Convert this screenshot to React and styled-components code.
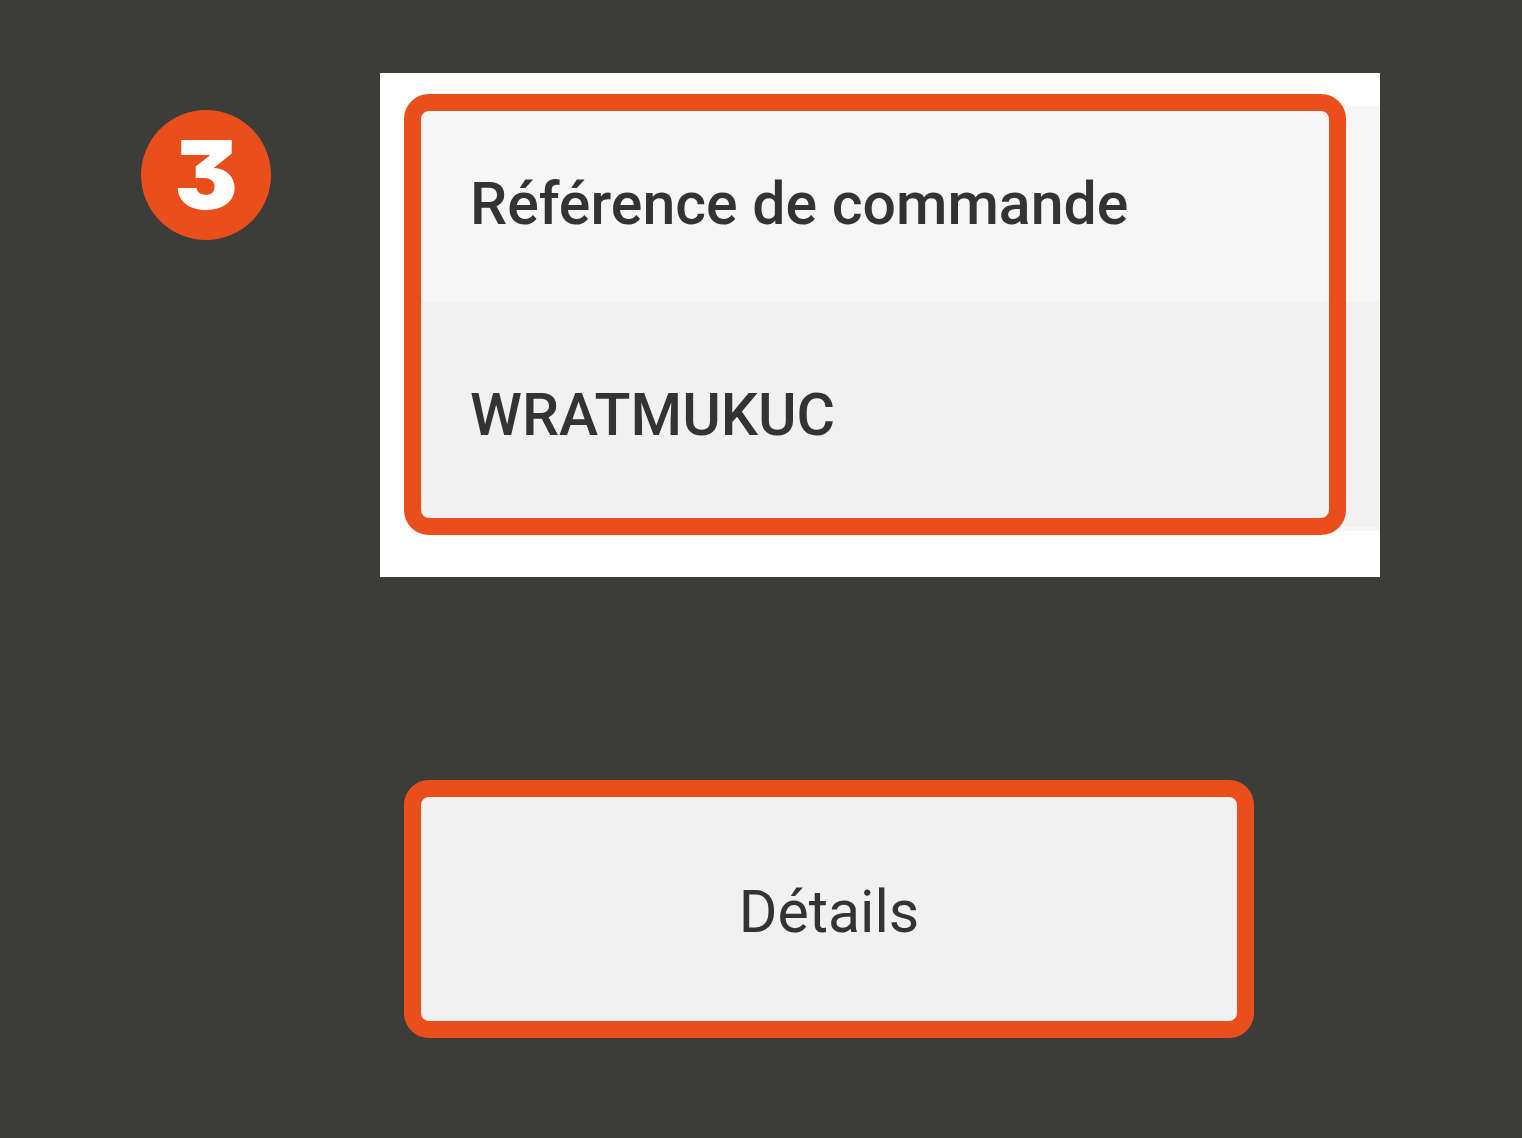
import styled, { createGlobalStyle } from "styled-components";

const Colors = {
    primary: '#ea4f1b',
    page: '#3c3c3a',
    text: '#333333',
    head: '#f6f6f6',
    row: '#f1f1f1',
};

const GlobalStyle = createGlobalStyle`
    * {
        box-sizing: border-box;
    }
    body {
        margin: 0;
        background: ${Colors.page};
        color: ${Colors.text};
        font-family: Roboto, "Liberation Sans", sans-serif;
    }
`;

const Page = styled.main`
    display: flex;
    align-items: flex-start;
    gap: 109px;
    min-height: 100vh;
    padding: 73px 142px 100px 141px;
`;

const StepBadge = styled.div`
    display: flex;
    flex-shrink: 0;
    align-items: center;
    justify-content: center;
    width: 130px;
    height: 130px;
    margin-top: 37px;
    border-radius: 50%;
    background: ${Colors.primary};
    color: white;
    font-family: Inter, sans-serif;
    font-size: 95px;
    font-weight: 900;
    line-height: 130px;
    /* flat-topped three */
    font-feature-settings: "cv09" 1;
`;

const Content = styled.div`
    display: flex;
    flex: 1;
    flex-direction: column;
    gap: 203px;
`;

const OrderCard = styled.section`
    position: relative;
    padding: 33px 0 46px 32px;
    background: white;
`;

const OrderTable = styled.table`
    width: 100%;
    border-collapse: collapse;
    border-bottom: 4px solid ${Colors.head};
`;

const Cell = styled.td`
    height: ${props => props.$height};
    padding: 0 58px;
    background: ${props => props.$bg};
    font-size: 59px;
    font-weight: 500;
    line-height: 70px;
    text-align: left;
`;

const Highlight = styled.div`
    position: absolute;
    top: 21px;
    right: 34px;
    bottom: 42px;
    left: 24px;
    border: 17px solid ${Colors.primary};
    border-radius: 25px;
    pointer-events: none;
`;

const DetailsButton = styled.button`
    width: 85%;
    margin-left: 24px;
    padding: 80px 0 74px;
    border: 17px solid ${Colors.primary};
    border-radius: 25px;
    background: ${Colors.row};
    color: inherit;
    font-family: inherit;
    font-size: 59px;
    line-height: 70px;
    cursor: pointer;
`;

const App = () => {
    return (
        <>
            <GlobalStyle />
            <Page>
                <StepBadge>3</StepBadge>
                <Content>
                    <OrderCard>
                        <OrderTable>
                            <thead>
                                <tr>
                                    <Cell as="th" scope="col" $height="196px" $bg={Colors.head}>Référence de commande</Cell>
                                </tr>
                            </thead>
                            <tbody>
                                <tr>
                                    <Cell $height="227px" $bg={Colors.row}>WRATMUKUC</Cell>
                                </tr>
                            </tbody>
                        </OrderTable>
                        <Highlight />
                    </OrderCard>
                    <DetailsButton type="button">Détails</DetailsButton>
                </Content>
            </Page>
        </>
    );
}

export default App;
